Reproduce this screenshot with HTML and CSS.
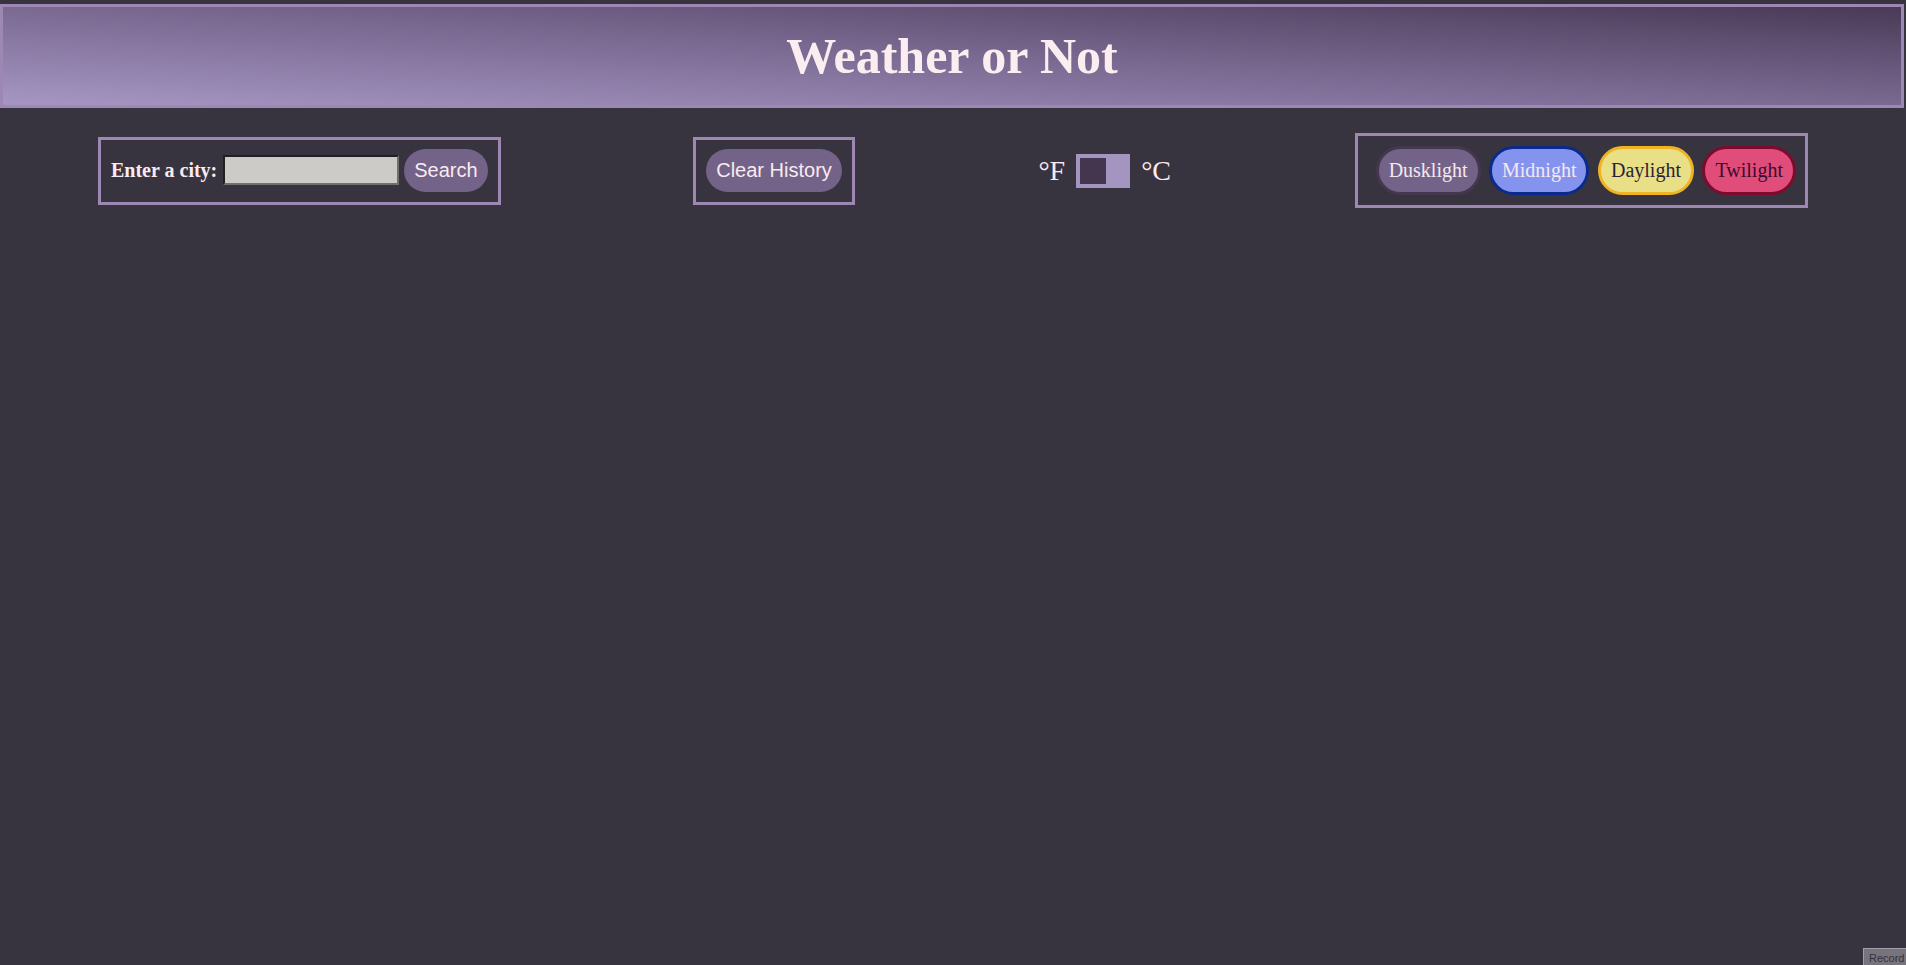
FILE: index.html
```html
<!DOCTYPE html>
<html lang="en">
<head>
<meta charset="utf-8">
<title>Weather or Not</title>
<link rel="stylesheet" href="styles.css">
</head>
<body>
<header class="site-header">
  <h1 class="site-title">Weather or Not</h1>
</header>
<main class="toolbar">
  <form class="panel search-panel">
    <label class="city-label" for="city">Enter a city:</label>
    <input class="city-input" id="city" type="text">
    <button class="pill-btn" type="button">Search</button>
  </form>
  <div class="panel clear-panel">
    <button class="pill-btn" type="button">Clear History</button>
  </div>
  <div class="unit-toggle">
    <span class="unit">°F</span>
    <span class="switch"><span class="knob"></span></span>
    <span class="unit">°C</span>
  </div>
  <div class="panel theme-panel">
    <button class="theme-btn dusk" type="button">Dusklight</button>
    <button class="theme-btn midnight" type="button">Midnight</button>
    <button class="theme-btn daylight" type="button">Daylight</button>
    <button class="theme-btn twilight" type="button">Twilight</button>
  </div>
</main>
<div class="record-tab">Record</div>
</body>
</html>
```
FILE: styles.css
```css
* { box-sizing: border-box; }

html, body {
  margin: 0;
  padding: 0;
}

body {
  background: #37343f;
  color: #fbeaef;
  font-family: "Liberation Serif", "Times New Roman", serif;
  min-height: 965px;
  overflow: hidden;
}

.site-header {
  margin: 4px 2px 0 0;
  border: 3px solid #9c88b2;
  background: linear-gradient(to top right, #a596c3, #7a6a92 50%, #4a3a57);
  padding: 22px 0 21px;
  text-align: center;
}

.site-title {
  margin: 0;
  font-size: 50px;
  font-weight: bold;
  color: #fcedf0;
  line-height: 55px;
}

.toolbar {
  display: flex;
  justify-content: space-between;
  align-items: center;
  padding: 0 98px 0 98px;
  margin-top: 25px;
}

.panel {
  border: 3px solid #9c88b2;
  display: flex;
  align-items: center;
}

.search-panel {
  margin: 0;
  padding: 9px 10px 10px;
  height: 68px;
}

.city-label {
  font-weight: bold;
  font-size: 20px;
  color: #fbeaef;
  margin-right: 6px;
}

.city-input {
  width: 176px;
  height: 30px;
  margin: 0 5px 0 0;
  background: #cccbc7;
  border-style: solid;
  border-width: 2px;
  border-color: #202020 #6f6f6f #6f6f6f #202020;
  padding: 0 4px;
}

.pill-btn {
  font-family: "Liberation Sans", Arial, sans-serif;
  font-size: 20px;
  line-height: 23px;
  color: #fbeaef;
  background: #736389;
  border: none;
  border-radius: 22px;
  padding: 10px 10px;
  cursor: pointer;
}

.clear-panel {
  padding: 9px 10px 10px;
  height: 68px;
  margin-left: 9px;
}

.unit-toggle {
  display: flex;
  align-items: center;
  gap: 11px;
  font-size: 28px;
  color: #fbeaef;
}

.switch {
  display: flex;
  width: 54px;
  height: 34px;
  padding: 4px;
  background: #a394c0;
}

.knob {
  width: 26px;
  height: 26px;
  background: #45364f;
}

.theme-panel {
  padding: 10px 9px 10px 18px;
  gap: 8.5px;
}

.theme-btn {
  font-family: "Liberation Serif", "Times New Roman", serif;
  font-size: 20px;
  line-height: 23px;
  padding: 10px 10px;
  border: 3px solid;
  border-radius: 25px;
  cursor: pointer;
}

.theme-btn.dusk {
  background: #736389;
  border-color: #44374f;
  color: #f6e7ef;
}

.theme-btn.midnight {
  background: #8494ee;
  border-color: #0b2b8c;
  color: #f6e7ef;
}

.theme-btn.daylight {
  background: #e9df87;
  border-color: #efb323;
  color: #2b1f36;
}

.theme-btn.twilight {
  background: #e04d7a;
  border-color: #7d0b2c;
  color: #3d0b2b;
}

.record-tab {
  position: fixed;
  left: 1863px;
  top: 948px;
  width: 60px;
  height: 30px;
  background: #78747e;
  border: 1px solid #a29ea8;
  font-family: "Liberation Sans", Arial, sans-serif;
  font-size: 11px;
  color: #35323b;
  padding: 3px 0 0 5px;
}
```
